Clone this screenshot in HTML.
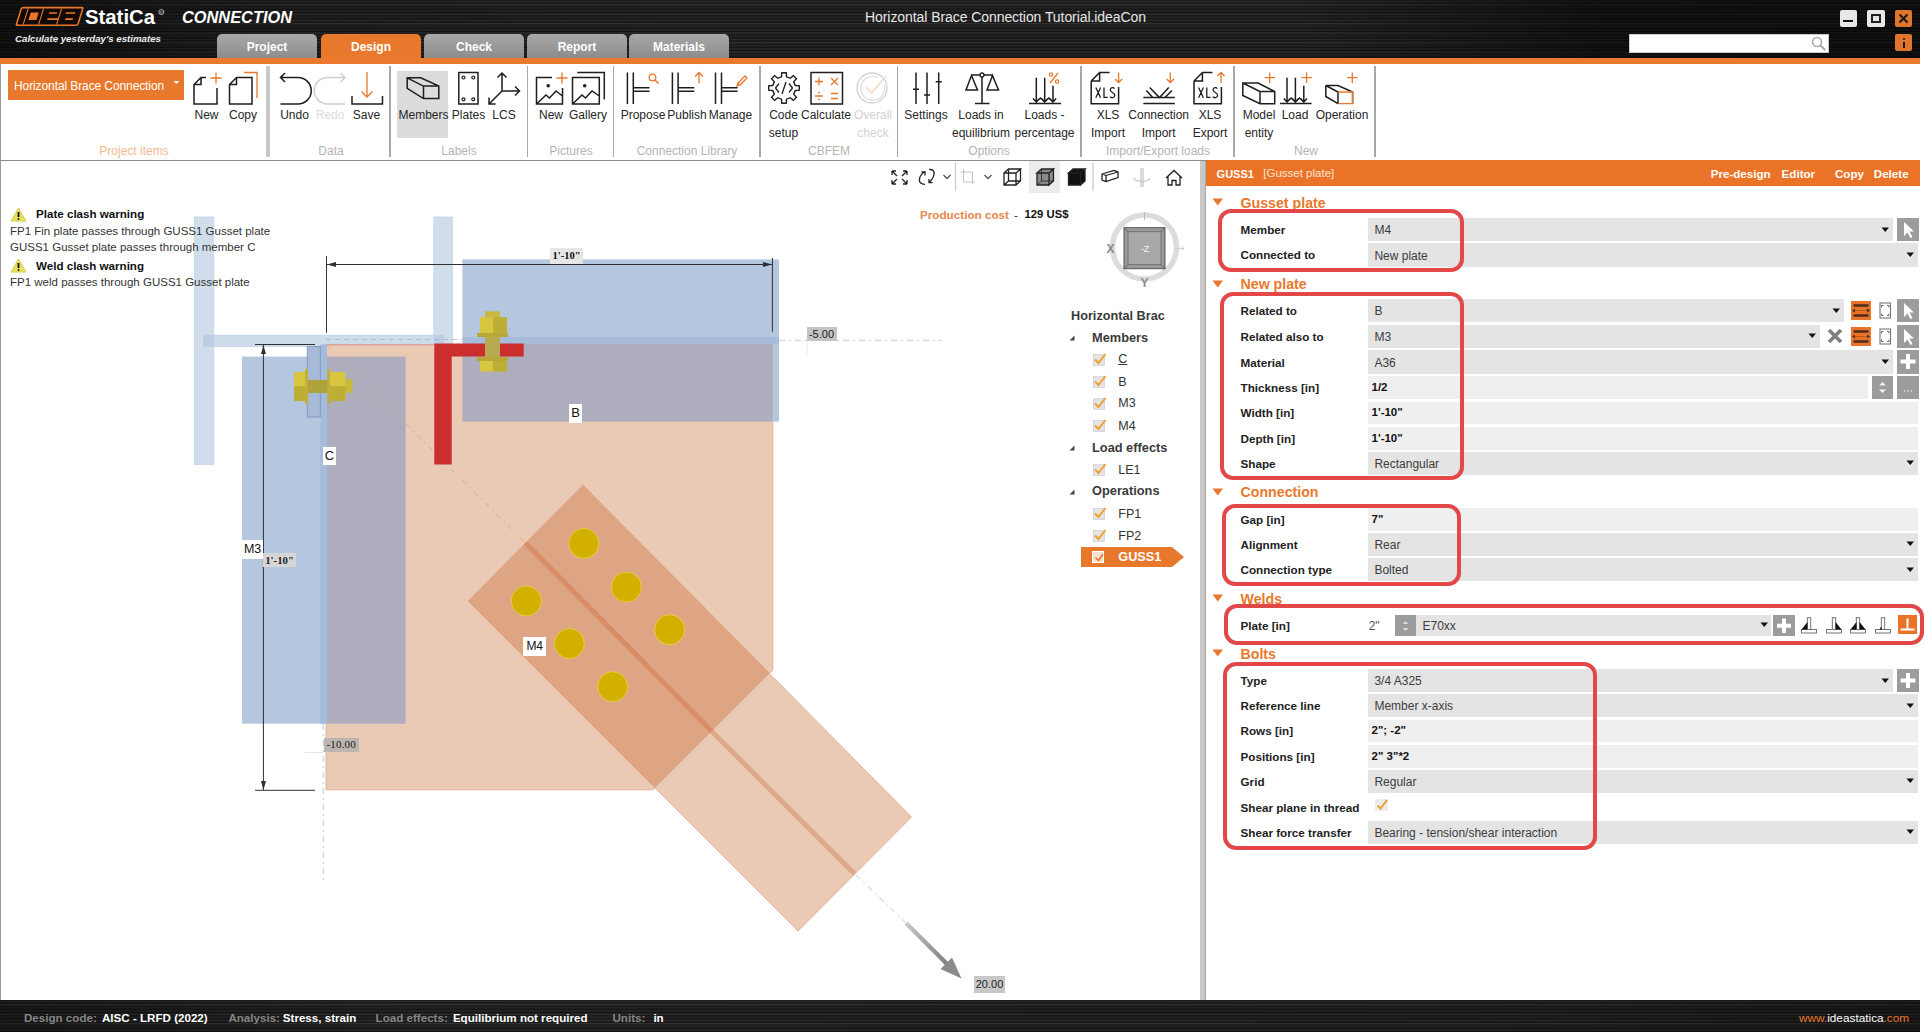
<!DOCTYPE html>
<html><head><meta charset="utf-8">
<style>
*{box-sizing:border-box;margin:0;padding:0}
html,body{width:1925px;height:1032px;overflow:hidden;background:#fff;font-family:"Liberation Sans",sans-serif;position:relative}
.a{position:absolute;white-space:nowrap}
.t{position:absolute;white-space:nowrap;line-height:1}
#title{left:0;top:0;width:1920px;height:58px;background:linear-gradient(90deg,rgba(0,0,0,0.55) 0px,rgba(0,0,0,0.1) 300px,rgba(0,0,0,0) 700px,rgba(0,0,0,0) 1300px,rgba(0,0,0,0.5) 1600px,rgba(0,0,0,0.55) 1920px),repeating-linear-gradient(180deg,#161616 0px,#2a2a2a 1.5px,#121212 3px,#303030 4.5px,#1a1a1a 6px,#242424 8px,#101010 9.5px)}
#oline{left:0;top:58px;width:1920px;height:6px;background:#eb7a2e}
.tab{top:34px;height:24px;width:100px;border-radius:5px 5px 0 0;background:linear-gradient(#a8a8a8,#8c8c8c);color:#fff;font-weight:bold;font-size:12px;text-align:center;line-height:26px}
#ribbon{left:0;top:64px;width:1920px;height:97px;background:#fff;border-left:1px solid #9a9a9a}
#canvas{left:0;top:161px;width:1200px;height:839px;background:#fff;border-left:1px solid #9a9a9a}
#splitter{left:1200px;top:161px;width:6px;height:839px;background:#c8c8c8;border-right:1px solid #a9a9a9}
#panel{left:1206px;top:161px;width:714px;height:839px;background:#fff}
#status{left:0;top:1000px;width:1920px;height:32px;background:linear-gradient(90deg,rgba(0,0,0,0.3) 0px,rgba(0,0,0,0) 400px,rgba(0,0,0,0.1) 1500px,rgba(0,0,0,0.3) 1920px),repeating-linear-gradient(180deg,#161616 0px,#2c2c2c 1.5px,#121212 3px,#323232 4.5px,#1a1a1a 6px,#262626 8px,#101010 9.5px)}
.rt{position:absolute;font-size:12px;color:#262626;text-align:center;width:80px;line-height:14px;white-space:nowrap}
.gl{position:absolute;font-size:12px;color:#b4b4b4;text-align:center;width:140px;line-height:14px;white-space:nowrap}
.sep{position:absolute;top:66px;width:1.5px;height:91px;background:#a8a8a8}
</style></head><body>
<div class="a" id="title"></div>
<svg class="a" style="left:0;top:0" width="300" height="58">
 <g transform="translate(15.1,25.9) skewX(-17.5)">
  <rect x="0.8" y="-18.3" width="61.5" height="17.6" rx="1.5" fill="#120804" stroke="#e8792c" stroke-width="1.6"/>
  <path d="M7.6 -17.5V-1.5 M23 -17.5V-1.5 M41 -17.5V-1.5" stroke="#e8792c" stroke-width="1.1"/>
  <rect x="11.5" y="-13.3" width="7.9" height="7.4" fill="#e8792c"/>
  <path d="M29.8 -12.9H37.8 M30.2 -6.7H41 M46.6 -12.9H56 M48.1 -6.7H55.6" stroke="#e8792c" stroke-width="1.7"/>
 </g>
 <text x="85" y="24" fill="#fff" font-family="Liberation Sans" font-weight="bold" font-size="20" textLength="70" lengthAdjust="spacingAndGlyphs">StatiCa</text>
 <circle cx="161.3" cy="12" r="2.5" fill="none" stroke="#bbb" stroke-width="0.9"/><text x="161.3" y="13.6" font-family="Liberation Sans" font-size="4" fill="#bbb" text-anchor="middle">R</text>
 <text x="182" y="22.5" fill="#fff" font-family="Liberation Sans" font-style="italic" font-weight="bold" font-size="16.5" textLength="110" lengthAdjust="spacingAndGlyphs">CONNECTION</text>
 <text x="15" y="42" fill="#f0f0f0" font-family="Liberation Sans" font-style="italic" font-weight="bold" font-size="9" textLength="146" lengthAdjust="spacingAndGlyphs">Calculate yesterday's estimates</text>
</svg>
<div class="a" style="left:865px;top:9px;font-size:14px;color:#e6e6e6;letter-spacing:-0.07px">Horizontal Brace Connection Tutorial.ideaCon</div>
<div class="a" style="left:1629px;top:34px;width:200px;height:19px;background:#fff;border:1px solid #ccc"></div>
<svg class="a" style="left:1810px;top:35px" width="18" height="18"><circle cx="7" cy="7" r="4.5" fill="none" stroke="#aaa" stroke-width="1.6"/><path d="M10.3 10.3l5 5" stroke="#aaa" stroke-width="2"/></svg>
<div class="a" style="left:1840px;top:10px;width:17px;height:17px;background:#e8e8e8;border-radius:2px"></div>
<div class="a" style="left:1843px;top:20px;width:10px;height:2px;background:#111"></div>
<div class="a" style="left:1867px;top:10px;width:18px;height:17px;background:#e8e8e8;border-radius:2px"></div>
<div class="a" style="left:1871px;top:14px;width:10px;height:9px;border:2px solid #222"></div>
<div class="a" style="left:1895px;top:10px;width:17px;height:17px;background:#e0762e;border-radius:2px"></div>
<svg class="a" style="left:1895px;top:10px" width="17" height="17"><path d="M4.5 4.5l8 8M12.5 4.5l-8 8" stroke="#1a1a1a" stroke-width="2.2"/></svg>
<div class="a" style="left:1895px;top:34px;width:17px;height:17px;background:#e0762e;border-radius:2px"></div>
<div class="a" style="left:1902.5px;top:38px;width:2.4px;height:2.4px;background:#1a1a1a;border-radius:1px"></div>
<div class="a" style="left:1902.5px;top:42px;width:2.4px;height:6px;background:#1a1a1a"></div>
<div class="a" id="oline"></div>

<div class="a" id="oline"></div>
<div class="a tab" style="left:217px">Project</div>
<div class="a tab" style="left:321px;background:#e8792c">Design</div>
<div class="a tab" style="left:424px">Check</div>
<div class="a tab" style="left:527px">Report</div>
<div class="a tab" style="left:629px">Materials</div>
<div class="a" id="ribbon"></div>
<div class="a" style="left:8px;top:70px;width:176px;height:30px;background:#e8792c"></div>
<div class="t" style="left:14px;top:80px;font-size:12px;color:#fff;letter-spacing:-0.1px">Horizontal Brace Connection</div>
<svg class="a" style="left:173px;top:80px" width="8" height="6"><path d="M0.5 1h6l-3 3z" fill="#fff"/></svg>
<div class="a" style="left:397px;top:71px;width:51px;height:67px;background:#dcdcdc"></div>
<svg class="a" style="left:0;top:0" width="1400" height="160"><path d="M217 88V104H194V84.5L201 77.5H206 M194 84.5H201V77.5" stroke="#1e1e1e" stroke-width="1.5" fill="none"/><path d="M216 72.5v11 M210.5 78h11" stroke="#e8792c" stroke-width="1.3" fill="none"/><path d="M252 77.5V104H229.5V84.5L236.5 77.5Z M229.5 84.5H236.5V77.5" stroke="#1e1e1e" stroke-width="1.5" fill="none"/><path d="M244 72.5H257V98" stroke="#e8792c" stroke-width="1.3" fill="none"/><path d="M280.5 77.5H298A13.2 13.2 0 0 1 298 104H280.5 M285 73L280.5 77.5L285 82" stroke="#1e1e1e" stroke-width="1.5" fill="none"/><path d="M345 77.5H327.5A13.2 13.2 0 0 0 327.5 104H345 M340.5 73L345 77.5L340.5 82" stroke="#cfcfcf" stroke-width="1.5" fill="none"/><path d="M367 72V97 M361.5 91.5L367 97L372.5 91.5" stroke="#e8792c" stroke-width="1.3" fill="none"/><path d="M352 96V104H382.5V96" stroke="#1e1e1e" stroke-width="1.5" fill="none"/><path d="M407.2 77.8H420.7L438.8 86.1V98.6H423.5L407.2 88.4Z M407.2 77.8L423.5 86.1V98.6 M423.5 86.1H438.8" stroke="#1e1e1e" stroke-width="1.5" fill="none"/><path d="M458.8 72.5H478V104H458.8Z" stroke="#1e1e1e" stroke-width="1.5" fill="none"/><circle cx="463.5" cy="77.5" r="1.5" fill="none" stroke="#1e1e1e" stroke-width="1.2"/><circle cx="473.3" cy="77.5" r="1.5" fill="none" stroke="#1e1e1e" stroke-width="1.2"/><circle cx="463.5" cy="99.3" r="1.5" fill="none" stroke="#1e1e1e" stroke-width="1.2"/><circle cx="473.3" cy="99.3" r="1.5" fill="none" stroke="#1e1e1e" stroke-width="1.2"/><path d="M502 91V73 M497.5 77.5L502 73L506.5 77.5 M502 91H519.5 M515 86.5L519.5 91L515 95.5 M502 91L489 104 M489 97.5V104H495.5" stroke="#1e1e1e" stroke-width="1.5" fill="none"/><path d="M552 77.5H536.5V104H562.5V88 M536.5 104L546 95L549.5 98L556 91L562.5 96" stroke="#1e1e1e" stroke-width="1.5" fill="none"/><circle cx="548.2" cy="85.7" r="1.8" fill="#1e1e1e"/><path d="M562 72.5v11 M556.5 78h11" stroke="#e8792c" stroke-width="1.3" fill="none"/><path d="M572.5 77.5H599.3V104H572.5Z M572.5 104L582 95L585.5 98L592 91L599.3 96 M577.2 72.6H604.3V99.5" stroke="#1e1e1e" stroke-width="1.5" fill="none"/><circle cx="584.7" cy="85.7" r="1.8" fill="#1e1e1e"/><path d="M627.4 72.5V104 M633.3 72.5V104 M633.3 87.7H649.5 M633.3 91.3H649.5" stroke="#1e1e1e" stroke-width="1.5" fill="none"/><path d="M672.4 72.5V104 M678.1 72.5V104 M678.1 87.7H694.3 M678.1 91.3H694.3" stroke="#1e1e1e" stroke-width="1.5" fill="none"/><path d="M715.5 72.5V104 M721.5 72.5V104 M721.5 87.7H737.6 M721.5 91.3H737.6" stroke="#1e1e1e" stroke-width="1.5" fill="none"/><circle cx="652.5" cy="77.4" r="3.3" fill="none" stroke="#e8792c" stroke-width="1.3"/><path d="M655 80L658.5 83.5" stroke="#e8792c" stroke-width="1.5" fill="none"/><path d="M699 83.5V72.5 M695 76.5L699 72.5L703 76.5" stroke="#e8792c" stroke-width="1.3" fill="none"/><path d="M738 83L745 76L747 78L740 85Z M738 83L737 86L740 85" stroke="#e8792c" stroke-width="1.3" fill="none"/><path d="M795.2 85.5 L799.3 85.8 L799.3 90.2 L795.2 90.5 L793.7 94.2 L796.4 97.3 L793.3 100.4 L790.2 97.7 L786.5 99.2 L786.2 103.3 L781.8 103.3 L781.5 99.2 L777.8 97.7 L774.7 100.4 L771.6 97.3 L774.3 94.2 L772.8 90.5 L768.7 90.2 L768.7 85.8 L772.8 85.5 L774.3 81.8 L771.6 78.7 L774.7 75.6 L777.8 78.3 L781.5 76.8 L781.8 72.7 L786.2 72.7 L786.5 76.8 L790.2 78.3 L793.3 75.6 L796.4 78.7 L793.7 81.8Z" stroke="#1e1e1e" stroke-width="1.4" fill="none"/><path d="M779 83.5L775.5 88L779 92.5 M789 83.5L792.5 88L789 92.5 M786 82L782 94" stroke="#1e1e1e" stroke-width="1.3" fill="none"/><path d="M811 72.5H842.5V104H811Z" stroke="#1e1e1e" stroke-width="1.5" fill="none"/><path d="M819 77.5v8 M815 81.5h8 M831 78l7 7 M838 78l-7 7 M815 96h8 M831 93.5h7 M831 98.5h7" stroke="#e8792c" stroke-width="1.3" fill="none"/><circle cx="819" cy="92.5" r="0.9" fill="#e8792c"/><circle cx="819" cy="99.5" r="0.9" fill="#e8792c"/><circle cx="872" cy="88" r="15" fill="none" stroke="#d0d0d0" stroke-width="1.3"/><path d="M884 84A12 12 0 1 1 878 77.5" fill="none" stroke="#dedede" stroke-width="1.2"/><path d="M866 87L871.5 93L886 76" stroke="#f6d9c4" stroke-width="1.5" fill="none"/><path d="M916 72.5V104 M927 72.5V104 M938.7 72.5V104 M913 89.3h6 M924 95h6 M935.7 81.8h6" stroke="#1e1e1e" stroke-width="1.5" fill="none"/><path d="M971 75H993 M982 77V103.5 M975 103.5H989.5 M971.5 75.5L966 90H977.5Z M992.5 75.5L987 90H998.5Z" stroke="#1e1e1e" stroke-width="1.5" fill="none"/><circle cx="982" cy="75" r="2" fill="#fff" stroke="#1e1e1e" stroke-width="1.3"/><path d="M1029 103.5H1061 M1036.3 77.7V102 M1044.7 77.7V102 M1053 85.7V102 M1033 98.5L1036.3 102L1039.5 98.5 M1041.5 98.5L1044.7 102L1048 98.5 M1049.8 98.5L1053 102L1056.2 98.5 M1036.3 102L1040.5 98L1044.7 102L1048.8 98L1053 102" stroke="#1e1e1e" stroke-width="1.5" fill="none"/><path d="M1050 83L1058 73" stroke="#e8792c" stroke-width="1.3" fill="none"/><circle cx="1051" cy="74.5" r="1.7" fill="none" stroke="#e8792c" stroke-width="1.2"/><circle cx="1057" cy="81.5" r="1.7" fill="none" stroke="#e8792c" stroke-width="1.2"/><path d="M1091.2 81V103.7H1118.6000000000001V87 M1091.2 81L1099.6000000000001 72.5H1109.6000000000001 M1091.2 81H1099.6000000000001V72.5" stroke="#1e1e1e" stroke-width="1.5" fill="none"/><path d="M1095.8 87.5L1100.6 97.8 M1100.6 87.5L1095.8 97.8 M1104.0 87.5V97.3H1107.8 M1114.5 88.6C1113.5 87.2 1110.3 87.2 1110.3 90C1110.3 92.6 1114.8 92.4 1114.8 95.2C1114.8 98.3 1111.0 98.3 1110.0 96.6" stroke="#1e1e1e" stroke-width="1.3" fill="none"/><path d="M1194 81V103.7H1221.4V87 M1194 81L1202.4 72.5H1212.4 M1194 81H1202.4V72.5" stroke="#1e1e1e" stroke-width="1.5" fill="none"/><path d="M1198.6 87.5L1203.3999999999999 97.8 M1203.3999999999999 87.5L1198.6 97.8 M1206.8 87.5V97.3H1210.6 M1217.3 88.6C1216.3 87.2 1213.1 87.2 1213.1 90C1213.1 92.6 1217.6 92.4 1217.6 95.2C1217.6 98.3 1213.8 98.3 1212.8 96.6" stroke="#1e1e1e" stroke-width="1.3" fill="none"/><path d="M1118.6 72.5V82.5 M1115 79L1118.6 82.5L1122.2 79" stroke="#e8792c" stroke-width="1.3" fill="none"/><path d="M1221 83V72.5 M1217.4 76L1221 72.5L1224.6 76" stroke="#e8792c" stroke-width="1.3" fill="none"/><path d="M1143.4 97.6H1174.8 M1143.4 103.6H1174.8 M1149.7 87.6L1159.5 97.6L1168.8 87.6 M1146.3 90.5L1152.8 97.6 M1165 97.6L1171.9 90.5" stroke="#1e1e1e" stroke-width="1.5" fill="none"/><path d="M1170.3 72.5V82.5 M1166.7 79L1170.3 82.5L1173.9 79" stroke="#e8792c" stroke-width="1.3" fill="none"/><path d="M1242.8 83H1258L1274.7 91.5V103.7H1260L1242.8 95.5Z M1242.8 83L1260 91.5V103.7 M1260 91.5H1274.7" stroke="#1e1e1e" stroke-width="1.5" fill="none"/><path d="M1269.7 72.5v10.5 M1264.5 77.7h10.5" stroke="#e8792c" stroke-width="1.3" fill="none"/><path d="M1280 103.5H1311.6 M1287 77.7V102 M1295.4 77.7V102 M1303.8 85.7V102 M1283.8 98.5L1287 102L1290.2 98.5 M1292.2 98.5L1295.4 102L1298.6 98.5 M1300.6 98.5L1303.8 102L1307 98.5 M1287 102L1291.2 98L1295.4 102L1299.6 98L1303.8 102" stroke="#1e1e1e" stroke-width="1.5" fill="none"/><path d="M1306.6 72.5v10.5 M1301.4 77.7h10.5" stroke="#e8792c" stroke-width="1.3" fill="none"/><path d="M1325.8 85.5H1338L1352.6 92V103.7 M1325.8 85.5V96.5L1338 103.7 M1325.8 85.5L1338 92V103.7" stroke="#1e1e1e" stroke-width="1.5" fill="none"/><path d="M1338 92H1352.6V103.7H1338" stroke="#e8792c" stroke-width="1.3" fill="none"/><path d="M1352.3 72.5v10.5 M1347.1 77.7h10.5" stroke="#e8792c" stroke-width="1.3" fill="none"/></svg>
<div class="rt" style="left:166.5px;top:108.0px">New</div>
<div class="rt" style="left:203px;top:108.0px">Copy</div>
<div class="rt" style="left:254.5px;top:108.0px">Undo</div>
<div class="rt" style="left:290px;top:108.0px;color:#dcdcdc">Redo</div>
<div class="rt" style="left:326.5px;top:108.0px">Save</div>
<div class="rt" style="left:383.5px;top:108.0px">Members</div>
<div class="rt" style="left:428.5px;top:108.0px">Plates</div>
<div class="rt" style="left:464px;top:108.0px">LCS</div>
<div class="rt" style="left:511px;top:108.0px">New</div>
<div class="rt" style="left:548px;top:108.0px">Gallery</div>
<div class="rt" style="left:603px;top:108.0px">Propose</div>
<div class="rt" style="left:647px;top:108.0px">Publish</div>
<div class="rt" style="left:690.5px;top:108.0px">Manage</div>
<div class="rt" style="left:743.5px;top:108.0px">Code</div>
<div class="rt" style="left:743.5px;top:125.5px">setup</div>
<div class="rt" style="left:786px;top:108.0px">Calculate</div>
<div class="rt" style="left:833px;top:108.0px;color:#d2d2d2">Overall</div>
<div class="rt" style="left:833px;top:125.5px;color:#d2d2d2">check</div>
<div class="rt" style="left:886px;top:108.0px">Settings</div>
<div class="rt" style="left:941px;top:108.0px">Loads in</div>
<div class="rt" style="left:941px;top:125.5px">equilibrium</div>
<div class="rt" style="left:1004.5px;top:108.0px">Loads -</div>
<div class="rt" style="left:1004.5px;top:125.5px">percentage</div>
<div class="rt" style="left:1068px;top:108.0px">XLS</div>
<div class="rt" style="left:1068px;top:125.5px">Import</div>
<div class="rt" style="left:1118.7px;top:108.0px">Connection</div>
<div class="rt" style="left:1118.7px;top:125.5px">Import</div>
<div class="rt" style="left:1170px;top:108.0px">XLS</div>
<div class="rt" style="left:1170px;top:125.5px">Export</div>
<div class="rt" style="left:1219px;top:108.0px">Model</div>
<div class="rt" style="left:1219px;top:125.5px">entity</div>
<div class="rt" style="left:1255px;top:108.0px">Load</div>
<div class="rt" style="left:1302px;top:108.0px">Operation</div>
<div class="gl" style="left:64px;top:143.5px;color:#f3b88e">Project items</div>
<div class="gl" style="left:261px;top:143.5px">Data</div>
<div class="gl" style="left:389px;top:143.5px">Labels</div>
<div class="gl" style="left:501px;top:143.5px">Pictures</div>
<div class="gl" style="left:617px;top:143.5px">Connection Library</div>
<div class="gl" style="left:759px;top:143.5px">CBFEM</div>
<div class="gl" style="left:919px;top:143.5px">Options</div>
<div class="gl" style="left:1088px;top:143.5px">Import/Export loads</div>
<div class="gl" style="left:1236px;top:143.5px">New</div>
<div class="a" style="left:265.5px;top:66px;width:4.5px;height:91px;background:#c8c8c8"></div>
<div class="sep" style="left:389px"></div>
<div class="sep" style="left:526.5px"></div>
<div class="sep" style="left:612.5px"></div>
<div class="sep" style="left:759px"></div>
<div class="sep" style="left:896.5px"></div>
<div class="sep" style="left:1080px"></div>
<div class="sep" style="left:1233.4px"></div>
<div class="sep" style="left:1374.4px"></div>
<div class="a" id="canvas"></div>
<div class="a" style="left:0;top:160px;width:1206px;height:1px;background:#8a8a8a"></div>
<div class="a" id="splitter"></div>
<div class="a" id="panel"></div>
<div class="a" id="status"></div>
<svg class="a" style="left:0;top:161px" width="1200" height="837" viewBox="0 161 1200 837">
<defs><linearGradient id="arrg" x1="0" y1="0" x2="1" y2="1"><stop offset="0" stop-color="#c8c8c8"/><stop offset="1" stop-color="#7a7a7a"/></linearGradient></defs>
<rect x="194.3" y="217" width="19.5" height="247.5" fill="#d0deec" stroke="#c4d4e6" stroke-width="0.8"/>
<rect x="433.8" y="217" width="18.6" height="247.5" fill="#d0deec" stroke="#c4d4e6" stroke-width="0.8"/>
<rect x="203.5" y="335.2" width="240.2" height="11.3" fill="#cfdcec" stroke="#c0d0e4" stroke-width="0.8"/>
<rect x="203.5" y="335.2" width="10.3" height="11.3" fill="#bccde4"/>
<rect x="433.8" y="335.2" width="9.9" height="11.3" fill="#bccde4"/>
<path d="M326 344.5H772.8V670.3L653.1 789.8H326Z" fill="#eacab4" stroke="#e2a888" stroke-width="0.8"/>
<path d="M326 344.8H433" stroke="#d9a0a0" stroke-width="1.2"/>
<path d="M583 485L911.5 817L798 931L468 601Z" fill="#eacab4" stroke="#e2a888" stroke-width="0.8"/>
<path d="M583 485L769.8 673.2L655 788L468 601Z" fill="#dda584"/>
<path d="M525.5 543L712 731.5" stroke="#d88d66" stroke-width="5"/>
<path d="M712 731.5L854.7 874" stroke="#dfa888" stroke-width="5"/>
<rect x="242" y="356.6" width="84" height="367.1" fill="#b5c6df"/>
<rect x="326" y="356.6" width="79.6" height="367.1" fill="#adadbd"/>
<rect x="320.3" y="344.5" width="6.7" height="379.2" fill="#a3bbdc"/>
<rect x="307.3" y="346.5" width="13" height="70.5" fill="#a6b9d6" stroke="#7f95bb" stroke-width="0.9"/>
<rect x="462.4" y="259.4" width="316.6" height="78" fill="#b5c6df"/>
<rect x="462.4" y="337" width="316.6" height="7" fill="#a7bcda"/>
<rect x="462.4" y="344" width="310.4" height="77.6" fill="#adadbd"/>
<rect x="772.8" y="344" width="6.2" height="77.6" fill="#b5c6df"/>
<path d="M326 339.5H462" stroke="#a8b4c4" stroke-width="0.8" stroke-dasharray="5 4"/>
<path d="M779 340.3H942" stroke="#c0c0c0" stroke-width="0.8" stroke-dasharray="6 4 2 4"/>
<path d="M323.3 724V880" stroke="#a8c0d8" stroke-width="0.8" stroke-dasharray="6 4 2 4"/>
<path d="M326.5 344.5L525.5 543" stroke="#d0a890" stroke-width="0.8" stroke-dasharray="6 4 2 4"/>
<path d="M856 875L905 922" stroke="#a8c0d8" stroke-width="0.8" stroke-dasharray="6 4 2 4"/>
<path d="M807 341V357" stroke="#e4e4e4" stroke-width="0.8"/>
<path d="M305 752.5H324" stroke="#e0e0e0" stroke-width="0.8"/>
<path d="M434.3 343.6H523.7V356.5H451.7V464.4H434.3Z" fill="#cc2d2d"/>
<rect x="328" y="380" width="17.5" height="13" fill="#c4b43c"/>
<rect x="307" y="380" width="21" height="13" fill="#b0a23a"/>
<rect x="294" y="372" width="13" height="29" fill="#d8c640"/><rect x="294" y="386" width="13" height="15" fill="#bfae36"/>
<rect x="305" y="369" width="3" height="35" fill="#c0b03a"/>
<rect x="327.4" y="369" width="3" height="35" fill="#c0b03a"/>
<rect x="330" y="372" width="15.5" height="29" fill="#d8c640"/><rect x="330" y="386" width="15.5" height="15" fill="#bfae36"/>
<rect x="345.5" y="379" width="7" height="14" fill="#c8b83e"/>
<rect x="485" y="311.3" width="15" height="6" fill="#c8b83e"/>
<rect x="480" y="317" width="27" height="16" fill="#d8c640"/><rect x="493" y="317" width="14" height="16" fill="#bfae36"/>
<rect x="477" y="333" width="31" height="4" fill="#b8a838"/>
<rect x="485" y="337" width="15" height="21" fill="#b8aa50"/>
<rect x="477" y="357" width="31" height="4" fill="#b8a838"/>
<rect x="480" y="361" width="27" height="10.5" fill="#d8c640"/><rect x="493" y="361" width="14" height="10.5" fill="#bfae36"/>
<circle cx="583.8" cy="543.4" r="15" fill="#d2b000" stroke="#e6cc3c" stroke-width="1"/>
<circle cx="626.4" cy="587.1" r="15" fill="#d2b000" stroke="#e6cc3c" stroke-width="1"/>
<circle cx="669.6" cy="629.7" r="15" fill="#d2b000" stroke="#e6cc3c" stroke-width="1"/>
<circle cx="526.3" cy="601" r="15" fill="#d2b000" stroke="#e6cc3c" stroke-width="1"/>
<circle cx="569.4" cy="643.6" r="15" fill="#d2b000" stroke="#e6cc3c" stroke-width="1"/>
<circle cx="612.6" cy="686.7" r="15" fill="#d2b000" stroke="#e6cc3c" stroke-width="1"/>
<path d="M906 923L950 967" stroke="url(#arrg)" stroke-width="4.5"/>
<path d="M961.5 978.5L940.5 969L952 957.5Z" fill="#8a8a8a"/>
<path d="M326.5 256V332.6 M772.4 258V331.8 M326.5 264.5H772.4" stroke="#303030" stroke-width="1"/>
<path d="M327 264.5L336 262V267Z M772 264.5L763 262V267Z" fill="#303030"/>
<path d="M263.4 344.5V790 M255 344.5H315 M255 790.3H315" stroke="#303030" stroke-width="1"/>
<path d="M263.4 345L261 354H266Z M263.4 790L261 781H266Z" fill="#303030"/>
</svg>
<div class="a" style="left:323px;top:447px;width:13px;height:18px;background:#fff;font-family:'Liberation Sans',sans-serif;font-size:13px;color:#111;text-align:center;line-height:18px;letter-spacing:0px;font-weight:normal">C</div>
<div class="a" style="left:569px;top:404px;width:13px;height:18.5px;background:#fff;font-family:'Liberation Sans',sans-serif;font-size:13px;color:#111;text-align:center;line-height:18.5px;letter-spacing:0px;font-weight:normal">B</div>
<div class="a" style="left:241.6px;top:540px;width:21.8px;height:18.5px;background:#fff;font-family:'Liberation Sans',sans-serif;font-size:12.5px;color:#111;text-align:center;line-height:18.5px;letter-spacing:-0.3px;font-weight:normal">M3</div>
<div class="a" style="left:523px;top:637px;width:23.3px;height:19px;background:#fff;font-family:'Liberation Sans',sans-serif;font-size:12px;color:#111;text-align:center;line-height:19px;letter-spacing:-0.3px;font-weight:normal">M4</div>
<div class="a" style="left:806.5px;top:326.5px;width:30px;height:14.1px;background:#c4c4c4;font-family:'Liberation Sans',sans-serif;font-size:11px;color:#222;text-align:center;line-height:14.1px;letter-spacing:0px;font-weight:normal">-5.00</div>
<div class="a" style="left:323.6px;top:738.4px;width:35.2px;height:13.4px;background:#bcb4ae;font-family:'Liberation Serif',serif;font-size:11px;color:#222;text-align:center;line-height:13.4px;letter-spacing:0.2px;font-weight:normal">-10.00</div>
<div class="a" style="left:974px;top:976px;width:31px;height:17px;background:#c8c8c8;font-family:'Liberation Sans',sans-serif;font-size:11px;color:#222;text-align:center;line-height:17px;letter-spacing:0px;font-weight:normal">20.00</div>
<div class="a" style="left:550px;top:248px;width:33px;height:16px;background:#e6e6e6;font-family:'Liberation Serif',serif;font-size:10.5px;color:#111;text-align:center;line-height:16px;letter-spacing:0px;font-weight:bold">1'-10"</div>
<div class="a" style="left:263.4px;top:553.4px;width:32.3px;height:14px;background:#d6d6d6;font-family:'Liberation Serif',serif;font-size:10.8px;color:#222;text-align:center;line-height:14px;letter-spacing:0px;font-weight:bold">1'-10"</div>
<svg class="a" style="left:10px;top:206.5px" width="17" height="15"><path d="M8.5 1L16 14H1Z" fill="#e6e05a" stroke="#d8d050" stroke-width="1"/><path d="M8.5 5V10" stroke="#111" stroke-width="1.8"/><circle cx="8.5" cy="12" r="0.9" fill="#111"/></svg>
<svg class="a" style="left:10px;top:257.5px" width="17" height="15"><path d="M8.5 1L16 14H1Z" fill="#e6e05a" stroke="#d8d050" stroke-width="1"/><path d="M8.5 5V10" stroke="#111" stroke-width="1.8"/><circle cx="8.5" cy="12" r="0.9" fill="#111"/></svg>
<div class="t" style="left:36px;top:208px;font-size:11.6px;font-weight:bold;color:#111">Plate clash warning</div>
<div class="t" style="left:10px;top:225.5px;font-size:11.5px;color:#333">FP1 Fin plate passes through GUSS1 Gusset plate</div>
<div class="t" style="left:10px;top:241.5px;font-size:11.5px;color:#333">GUSS1 Gusset plate passes through member C</div>
<div class="t" style="left:36px;top:259.5px;font-size:11.6px;font-weight:bold;color:#111">Weld clash warning</div>
<div class="t" style="left:10px;top:277px;font-size:11.5px;color:#333">FP1 weld passes through GUSS1 Gusset plate</div>
<div class="t" style="left:920px;top:208.5px;font-size:11.7px;font-weight:bold;color:#e5884e">Production cost</div>
<div class="t" style="left:1014px;top:208.5px;font-size:11.7px;color:#333">-</div>
<div class="t" style="left:1024.5px;top:208.5px;font-size:11.3px;font-weight:bold;color:#111">129 US$</div>
<div class="a" style="left:1029px;top:160.5px;width:31px;height:32px;background:#ececec"></div>
<svg class="a" style="left:880px;top:161px" width="320" height="32" viewBox="880 161 320 32">
<g stroke="#222" stroke-width="1.3" fill="none">
<path d="M892 171L897 176M892 171v4M892 171h4 M907 171L902 176M907 171v4M907 171h-4 M892 184L897 179M892 184v-4M892 184h4 M907 184L902 179M907 184v-4M907 184h-4"/>
<path d="M925 171.5C918 176 917 184.5 925 184.3 M921.5 172H925V175.5 M929.2 169.5C936.5 169 935 177 929 182.7 M929 179V182.7H932.5"/>
<path d="M943.5 175l3.5 3.5l3.5-3.5" stroke="#555"/>
<path d="M955.5 163V191 M1093 163V191" stroke="#ccc"/>
<path d="M963.5 169V182H975 M960.6 172H972.5V184" stroke="#c4c4c4" stroke-width="1"/>
<path d="M984.5 175l3.5 3.5l3.5-3.5" stroke="#555"/>
<path d="M1004 173H1016V185H1004Z M1004 173L1008.5 169H1020.5L1016 173 M1020.5 169V181L1016 185 M1008.5 169V181H1020.5 M1008.5 181L1004 185"/>
<path d="M1037 173H1049V185H1037Z M1037 173L1041.5 169H1053.5L1049 173Z M1053.5 169V181L1049 185V173Z" fill="#8a8a8a"/>
<path d="M1041.5 169V181H1053.5 M1041.5 181L1037 185" stroke-width="0.8"/>
<path d="M1068.5 173H1080.5V185H1068.5Z M1068.5 173L1073 169H1085L1080.5 173Z M1085 169V181L1080.5 185V173Z" fill="#111"/>
<path d="M1102 174L1114 170.5L1118 172V177.5L1106 181.5L1102 180Z M1102 174L1106 175.5V181.5 M1106 175.5L1118 172"/>
<path d="M1141 168V187 M1143 168V187 M1134 178A8 3.5 0 0 0 1150 178" stroke="#c8c8c8"/>
<path d="M1166 178L1174 170.5L1182 178 M1168 176V185H1172V180.5H1176V185H1180V176"/>
</g></svg>
<svg class="a" style="left:1100px;top:205px" width="90" height="90" viewBox="1100 205 90 90">
<circle cx="1144.5" cy="247" r="32" fill="none" stroke="#dcdcdc" stroke-width="5.6"/>
<path d="M1144.5 212V220" stroke="#bbb" stroke-width="1"/>
<rect x="1124" y="227.7" width="41" height="41" fill="#9a9a9a" stroke="#555" stroke-width="1"/>
<rect x="1128" y="231.7" width="33" height="33" fill="#a8a8a8" stroke="#666" stroke-width="0.8"/>
<path d="M1124 227.7L1128 231.7M1165 227.7L1161 231.7M1124 268.7L1128 264.7M1165 268.7L1161 264.7" stroke="#555" stroke-width="0.8"/>
<text x="1145" y="251.5" font-family="Liberation Sans" font-size="9" fill="#f4f4f4" text-anchor="middle">-Z</text>
<text x="1110.5" y="253" font-family="Liberation Sans" font-weight="bold" font-size="12" fill="#8a8a8a" text-anchor="middle">X</text>
<text x="1144.5" y="287" font-family="Liberation Sans" font-weight="bold" font-size="12" fill="#8a8a8a" text-anchor="middle">Y</text>
<path d="M1175 248.5H1184 M1181.5 246.5L1184 248.5L1181.5 250.5" stroke="#c8c8c8" stroke-width="0.9" fill="none"/>
</svg>
<div class="t" style="left:1071px;top:309.5px;font-size:12.7px;font-weight:bold;color:#3a3a3a">Horizontal Brac</div>
<svg class="a" style="left:1068px;top:334.4px" width="8" height="8"><path d="M6.5 1.5V6.5H1.5Z" fill="#444"/></svg>
<div class="t" style="left:1092px;top:331.9px;font-size:12.8px;font-weight:bold;color:#3a3a3a">Members</div>
<div class="a" style="left:1093px;top:353.7px;width:12px;height:12px;background:#e4e4e4;border:1px solid #d8d8d8"></div>
<svg class="a" style="left:1092px;top:350.7px" width="16" height="16"><path d="M3 8.5L6.5 12L13.5 3" stroke="#f0a030" stroke-width="2" fill="none"/></svg>
<div class="t" style="left:1118.3px;top:353.2px;font-size:12.5px;color:#333;text-decoration:underline">C</div>
<div class="a" style="left:1093px;top:376.2px;width:12px;height:12px;background:#e4e4e4;border:1px solid #d8d8d8"></div>
<svg class="a" style="left:1092px;top:373.2px" width="16" height="16"><path d="M3 8.5L6.5 12L13.5 3" stroke="#f0a030" stroke-width="2" fill="none"/></svg>
<div class="t" style="left:1118.3px;top:375.7px;font-size:12.5px;color:#333">B</div>
<div class="a" style="left:1093px;top:397.9px;width:12px;height:12px;background:#e4e4e4;border:1px solid #d8d8d8"></div>
<svg class="a" style="left:1092px;top:394.9px" width="16" height="16"><path d="M3 8.5L6.5 12L13.5 3" stroke="#f0a030" stroke-width="2" fill="none"/></svg>
<div class="t" style="left:1118.3px;top:397.4px;font-size:12.5px;color:#333">M3</div>
<div class="a" style="left:1093px;top:420.4px;width:12px;height:12px;background:#e4e4e4;border:1px solid #d8d8d8"></div>
<svg class="a" style="left:1092px;top:417.4px" width="16" height="16"><path d="M3 8.5L6.5 12L13.5 3" stroke="#f0a030" stroke-width="2" fill="none"/></svg>
<div class="t" style="left:1118.3px;top:419.9px;font-size:12.5px;color:#333">M4</div>
<svg class="a" style="left:1068px;top:444.3px" width="8" height="8"><path d="M6.5 1.5V6.5H1.5Z" fill="#444"/></svg>
<div class="t" style="left:1092px;top:441.8px;font-size:12.8px;font-weight:bold;color:#3a3a3a">Load effects</div>
<div class="a" style="left:1093px;top:464px;width:12px;height:12px;background:#e4e4e4;border:1px solid #d8d8d8"></div>
<svg class="a" style="left:1092px;top:461px" width="16" height="16"><path d="M3 8.5L6.5 12L13.5 3" stroke="#f0a030" stroke-width="2" fill="none"/></svg>
<div class="t" style="left:1118.3px;top:463.5px;font-size:12.5px;color:#333">LE1</div>
<svg class="a" style="left:1068px;top:487.9px" width="8" height="8"><path d="M6.5 1.5V6.5H1.5Z" fill="#444"/></svg>
<div class="t" style="left:1092px;top:485.4px;font-size:12.8px;font-weight:bold;color:#3a3a3a">Operations</div>
<div class="a" style="left:1093px;top:508px;width:12px;height:12px;background:#e4e4e4;border:1px solid #d8d8d8"></div>
<svg class="a" style="left:1092px;top:505px" width="16" height="16"><path d="M3 8.5L6.5 12L13.5 3" stroke="#f0a030" stroke-width="2" fill="none"/></svg>
<div class="t" style="left:1118.3px;top:507.5px;font-size:12.5px;color:#333">FP1</div>
<div class="a" style="left:1093px;top:530px;width:12px;height:12px;background:#e4e4e4;border:1px solid #d8d8d8"></div>
<svg class="a" style="left:1092px;top:527px" width="16" height="16"><path d="M3 8.5L6.5 12L13.5 3" stroke="#f0a030" stroke-width="2" fill="none"/></svg>
<div class="t" style="left:1118.3px;top:529.5px;font-size:12.5px;color:#333">FP2</div>
<svg class="a" style="left:1081px;top:547px" width="104" height="21"><path d="M0 0H91L103 10L91 20H0Z" fill="#e8792c"/></svg>
<div class="a" style="left:1092px;top:551px;width:12px;height:12px;background:#f8e0d0;border:1px solid #fff"></div>
<svg class="a" style="left:1092px;top:549px" width="16" height="16"><path d="M3.5 8.5L6.5 11.5L11 5" stroke="#e8792c" stroke-width="1.6" fill="none"/></svg>
<div class="t" style="left:1118.3px;top:550.5px;font-size:12.7px;font-weight:bold;color:#fff">GUSS1</div>
<div class="a" style="left:1206px;top:160px;width:714px;height:26px;background:#ea7327"></div>
<div class="t" style="left:1216.6px;top:168.5px;font-size:11px;font-weight:bold;color:#fff">GUSS1</div>
<div class="t" style="left:1263.3px;top:168px;font-size:11.5px;color:#fbe3d2">[Gusset plate]</div>
<div class="t" style="left:1710.7px;top:168px;font-size:11.6px;font-weight:bold;color:#fff">Pre-design</div>
<div class="t" style="left:1781.6px;top:168px;font-size:11.6px;font-weight:bold;color:#fff">Editor</div>
<div class="t" style="left:1835px;top:168px;font-size:11.6px;font-weight:bold;color:#fff">Copy</div>
<div class="t" style="left:1873.8px;top:168px;font-size:11.6px;font-weight:bold;color:#fff">Delete</div>
<svg class="a" style="left:1212px;top:198px" width="12" height="9"><path d="M0.5 0.5H11L5.75 7.5Z" fill="#e8792c"/></svg>
<div class="t" style="left:1240.5px;top:195.5px;font-size:14.2px;font-weight:bold;color:#e8792c">Gusset plate</div>
<div class="t" style="left:1240.5px;top:223.85000000000002px;font-size:11.7px;font-weight:bold;color:#222">Member</div>
<div class="a" style="left:1368px;top:217.6px;width:525px;height:23.900000000000006px;background:#e4e4e4"></div>
<div class="t" style="left:1374.4px;top:223.95000000000002px;font-size:12px;color:#3c3c3c">M4</div>
<svg class="a" style="left:1881px;top:226.55px" width="9" height="6"><path d="M0.5 0.5H8L4.25 5Z" fill="#111"/></svg>
<div class="a" style="left:1896.5px;top:217.6px;width:22px;height:23.900000000000006px;background:#9c9c9c"></div>
<svg class="a" style="left:1896.5px;top:217.6px" width="22" height="23.900000000000006"><path d="M7 4L7 18L10.5 14.5L13.5 20L15.5 19L12.5 13.5H17Z" fill="#fff"/></svg>
<div class="t" style="left:1240.5px;top:249.45px;font-size:11.7px;font-weight:bold;color:#222">Connected to</div>
<div class="a" style="left:1368px;top:243.4px;width:550px;height:23.49999999999997px;background:#e4e4e4"></div>
<div class="t" style="left:1374.4px;top:249.54999999999998px;font-size:12px;color:#3c3c3c">New plate</div>
<svg class="a" style="left:1905.8px;top:252.14999999999998px" width="9" height="6"><path d="M0.5 0.5H8L4.25 5Z" fill="#111"/></svg>
<svg class="a" style="left:1212px;top:279.6px" width="12" height="9"><path d="M0.5 0.5H11L5.75 7.5Z" fill="#e8792c"/></svg>
<div class="t" style="left:1240.5px;top:277.1px;font-size:14.2px;font-weight:bold;color:#e8792c">New plate</div>
<div class="t" style="left:1240.5px;top:304.8px;font-size:11.7px;font-weight:bold;color:#222">Related to</div>
<div class="a" style="left:1368px;top:299px;width:475.5px;height:23px;background:#e4e4e4"></div>
<div class="t" style="left:1374.4px;top:304.9px;font-size:12px;color:#3c3c3c">B</div>
<svg class="a" style="left:1832px;top:307.5px" width="9" height="6"><path d="M0.5 0.5H8L4.25 5Z" fill="#111"/></svg>
<svg class="a" style="left:1851px;top:301.0px" width="20" height="19"><rect x="0" y="0" width="20" height="19" fill="#ea7327"/><path d="M2.5 4.5H17.5 M2.5 14.5H17.5" stroke="#4a2e1e" stroke-width="2.6"/><path d="M1 9.5L4 7.5V11.5Z M19 9.5L16 7.5V11.5Z" fill="#4a2e1e"/><path d="M4 9.5H16" stroke="#b85a20" stroke-width="1"/></svg>
<svg class="a" style="left:1879px;top:302.0px" width="13" height="17"><rect x="1" y="1" width="10.5" height="15" fill="#fff" stroke="#777" stroke-width="1.1"/><path d="M2.5 3.5h2M2.5 3.5v2 M10 3.5h-2M10 3.5v2 M2.5 13.5h2M2.5 13.5v-2 M10 13.5h-2M10 13.5v-2" stroke="#666" stroke-width="1"/></svg>
<div class="a" style="left:1896.5px;top:299px;width:22px;height:23px;background:#9c9c9c"></div>
<svg class="a" style="left:1896.5px;top:299px" width="22" height="23"><path d="M7 4L7 18L10.5 14.5L13.5 20L15.5 19L12.5 13.5H17Z" fill="#fff"/></svg>
<div class="t" style="left:1240.5px;top:330.6px;font-size:11.7px;font-weight:bold;color:#222">Related also to</div>
<div class="a" style="left:1368px;top:325px;width:452px;height:22.600000000000023px;background:#e4e4e4"></div>
<div class="t" style="left:1374.4px;top:330.7px;font-size:12px;color:#3c3c3c">M3</div>
<svg class="a" style="left:1808px;top:333.3px" width="9" height="6"><path d="M0.5 0.5H8L4.25 5Z" fill="#111"/></svg>
<svg class="a" style="left:1826px;top:327.3px" width="18" height="18"><path d="M3 3L15 15M15 3L3 15" stroke="#808080" stroke-width="3.8"/></svg>
<svg class="a" style="left:1851px;top:326.8px" width="20" height="19"><rect x="0" y="0" width="20" height="19" fill="#ea7327"/><path d="M2.5 4.5H17.5 M2.5 14.5H17.5" stroke="#4a2e1e" stroke-width="2.6"/><path d="M1 9.5L4 7.5V11.5Z M19 9.5L16 7.5V11.5Z" fill="#4a2e1e"/><path d="M4 9.5H16" stroke="#b85a20" stroke-width="1"/></svg>
<svg class="a" style="left:1879px;top:327.8px" width="13" height="17"><rect x="1" y="1" width="10.5" height="15" fill="#fff" stroke="#777" stroke-width="1.1"/><path d="M2.5 3.5h2M2.5 3.5v2 M10 3.5h-2M10 3.5v2 M2.5 13.5h2M2.5 13.5v-2 M10 13.5h-2M10 13.5v-2" stroke="#666" stroke-width="1"/></svg>
<div class="a" style="left:1896.5px;top:325px;width:22px;height:22.600000000000023px;background:#9c9c9c"></div>
<svg class="a" style="left:1896.5px;top:325px" width="22" height="22.600000000000023"><path d="M7 4L7 18L10.5 14.5L13.5 20L15.5 19L12.5 13.5H17Z" fill="#fff"/></svg>
<div class="t" style="left:1240.5px;top:356.55px;font-size:11.7px;font-weight:bold;color:#222">Material</div>
<div class="a" style="left:1368px;top:350.3px;width:525px;height:23.899999999999977px;background:#e4e4e4"></div>
<div class="t" style="left:1374.4px;top:356.65px;font-size:12px;color:#3c3c3c">A36</div>
<svg class="a" style="left:1881px;top:359.25px" width="9" height="6"><path d="M0.5 0.5H8L4.25 5Z" fill="#111"/></svg>
<div class="a" style="left:1896.5px;top:350.3px;width:22px;height:23.899999999999977px;background:#9c9c9c"></div>
<svg class="a" style="left:1896.5px;top:350.3px" width="22" height="23.899999999999977"><path d="M11 4V19 M3.5 11.5H18.5" stroke="#fff" stroke-width="4"/></svg>
<div class="t" style="left:1240.5px;top:381.7px;font-size:11.7px;font-weight:bold;color:#222">Thickness [in]</div>
<div class="a" style="left:1368px;top:376px;width:500px;height:22.80000000000001px;background:#efefef"></div>
<div class="t" style="left:1371.5px;top:381.79999999999995px;font-size:11.5px;font-weight:bold;color:#111">1/2</div>
<div class="a" style="left:1872px;top:376px;width:21px;height:22.8px;background:#9c9c9c"></div>
<svg class="a" style="left:1872px;top:376px" width="21" height="23"><path d="M7 9.5L10.5 6L14 9.5Z M7 13.5L10.5 17L14 13.5Z" fill="#f0f0f0"/></svg>
<div class="a" style="left:1896.5px;top:376px;width:22px;height:22.80000000000001px;background:#9c9c9c"></div>
<svg class="a" style="left:1896.5px;top:376px" width="22" height="22.80000000000001"><circle cx="7.5" cy="15" r="0.8" fill="#eee"/><circle cx="11" cy="15" r="0.8" fill="#eee"/><circle cx="14.5" cy="15" r="0.8" fill="#eee"/></svg>
<div class="t" style="left:1240.5px;top:407.15000000000003px;font-size:11.7px;font-weight:bold;color:#222">Width [in]</div>
<div class="a" style="left:1368px;top:401.5px;width:550px;height:22.69999999999999px;background:#efefef"></div>
<div class="t" style="left:1371.5px;top:407.25px;font-size:11.5px;font-weight:bold;color:#111">1'-10"</div>
<div class="t" style="left:1240.5px;top:432.65000000000003px;font-size:11.7px;font-weight:bold;color:#222">Depth [in]</div>
<div class="a" style="left:1368px;top:427px;width:550px;height:22.69999999999999px;background:#efefef"></div>
<div class="t" style="left:1371.5px;top:432.75px;font-size:11.5px;font-weight:bold;color:#111">1'-10"</div>
<div class="t" style="left:1240.5px;top:457.65000000000003px;font-size:11.7px;font-weight:bold;color:#222">Shape</div>
<div class="a" style="left:1368px;top:452px;width:550px;height:22.69999999999999px;background:#e4e4e4"></div>
<div class="t" style="left:1374.4px;top:457.75px;font-size:12px;color:#3c3c3c">Rectangular</div>
<svg class="a" style="left:1905.8px;top:460.35px" width="9" height="6"><path d="M0.5 0.5H8L4.25 5Z" fill="#111"/></svg>
<svg class="a" style="left:1212px;top:487.7px" width="12" height="9"><path d="M0.5 0.5H11L5.75 7.5Z" fill="#e8792c"/></svg>
<div class="t" style="left:1240.5px;top:485.2px;font-size:14.2px;font-weight:bold;color:#e8792c">Connection</div>
<div class="t" style="left:1240.5px;top:514.0px;font-size:11.7px;font-weight:bold;color:#222">Gap [in]</div>
<div class="a" style="left:1368px;top:508.4px;width:550px;height:22.600000000000023px;background:#efefef"></div>
<div class="t" style="left:1371.5px;top:514.1px;font-size:11.5px;font-weight:bold;color:#111">7"</div>
<div class="t" style="left:1240.5px;top:538.6999999999999px;font-size:11.7px;font-weight:bold;color:#222">Alignment</div>
<div class="a" style="left:1368px;top:533px;width:550px;height:22.799999999999955px;background:#e4e4e4"></div>
<div class="t" style="left:1374.4px;top:538.8px;font-size:12px;color:#3c3c3c">Rear</div>
<svg class="a" style="left:1905.8px;top:541.4px" width="9" height="6"><path d="M0.5 0.5H8L4.25 5Z" fill="#111"/></svg>
<div class="t" style="left:1240.5px;top:564.0999999999999px;font-size:11.7px;font-weight:bold;color:#222">Connection type</div>
<div class="a" style="left:1368px;top:558.4px;width:550px;height:22.800000000000068px;background:#e4e4e4"></div>
<div class="t" style="left:1374.4px;top:564.1999999999999px;font-size:12px;color:#3c3c3c">Bolted</div>
<svg class="a" style="left:1905.8px;top:566.8px" width="9" height="6"><path d="M0.5 0.5H8L4.25 5Z" fill="#111"/></svg>
<svg class="a" style="left:1212px;top:594px" width="12" height="9"><path d="M0.5 0.5H11L5.75 7.5Z" fill="#e8792c"/></svg>
<div class="t" style="left:1240.5px;top:591.5px;font-size:14.2px;font-weight:bold;color:#e8792c">Welds</div>
<div class="t" style="left:1240.5px;top:619.7px;font-size:11.7px;font-weight:bold;color:#222">Plate [in]</div>
<div class="t" style="left:1368.7px;top:619.8000000000001px;font-size:12px;color:#555">2"</div>
<div class="a" style="left:1394.8px;top:614.6px;width:21px;height:21.6px;background:#9c9c9c"></div>
<svg class="a" style="left:1394.8px;top:614.6px" width="21" height="22"><path d="M7.5 9L10.5 6L13.5 9Z M7.5 13L10.5 16L13.5 13Z" fill="#d8d8d8"/></svg>
<div class="a" style="left:1415.7px;top:614.6px;width:355.7px;height:21.6px;background:#e4e4e4"></div>
<div class="t" style="left:1422.5px;top:619.8000000000001px;font-size:12px;color:#3c3c3c">E70xx</div>
<svg class="a" style="left:1760px;top:622.4000000000001px" width="9" height="6"><path d="M0.5 0.5H8L4.25 5Z" fill="#111"/></svg>
<div class="a" style="left:1773.3px;top:614.6px;width:21.7px;height:21.6px;background:#9c9c9c"></div>
<svg class="a" style="left:1773.3px;top:614.6px" width="22" height="22"><path d="M11 3.5V18 M4 10.8H18" stroke="#fff" stroke-width="4"/></svg>
<svg class="a" style="left:1801px;top:616.5px" width="16" height="17"><rect x="6.3" y="0.7" width="3.4" height="11.8" fill="#fff" stroke="#666" stroke-width="0.9"/><rect x="0.5" y="12.5" width="15" height="3.5" fill="#fff" stroke="#666" stroke-width="0.9"/><path d="M0.5 12.5L6.5 12.5L6.5 5Z" fill="#111"/></svg>
<svg class="a" style="left:1826px;top:616.5px" width="16" height="17"><rect x="6.3" y="0.7" width="3.4" height="11.8" fill="#fff" stroke="#666" stroke-width="0.9"/><rect x="0.5" y="12.5" width="15" height="3.5" fill="#fff" stroke="#666" stroke-width="0.9"/><path d="M15.5 12.5L9.5 12.5L9.5 5Z" fill="#111"/></svg>
<svg class="a" style="left:1850px;top:616.5px" width="16" height="17"><rect x="6.3" y="0.7" width="3.4" height="11.8" fill="#fff" stroke="#666" stroke-width="0.9"/><rect x="0.5" y="12.5" width="15" height="3.5" fill="#fff" stroke="#666" stroke-width="0.9"/><path d="M0.5 12.5L6.5 12.5L6.5 5Z" fill="#111"/><path d="M15.5 12.5L9.5 12.5L9.5 5Z" fill="#111"/></svg>
<svg class="a" style="left:1875.4px;top:616.5px" width="16" height="17"><rect x="6.3" y="0.7" width="3.4" height="11.8" fill="#fff" stroke="#666" stroke-width="0.9"/><rect x="0.5" y="12.5" width="15" height="3.5" fill="#fff" stroke="#666" stroke-width="0.9"/><path d="M4.5 12.5L6.5 12.5L6.5 9Z" fill="#111"/></svg>
<div class="a" style="left:1898px;top:615.3px;width:19px;height:19px;background:#ea7327"></div>
<svg class="a" style="left:1898px;top:615.3px" width="19" height="19"><path d="M9.5 3.5V13.5 M2.5 14.5H16.5" stroke="#fff" stroke-width="2" fill="none"/></svg>
<svg class="a" style="left:1212px;top:649px" width="12" height="9"><path d="M0.5 0.5H11L5.75 7.5Z" fill="#e8792c"/></svg>
<div class="t" style="left:1240.5px;top:646.5px;font-size:14.2px;font-weight:bold;color:#e8792c">Bolts</div>
<div class="t" style="left:1240.5px;top:674.8px;font-size:11.7px;font-weight:bold;color:#222">Type</div>
<div class="a" style="left:1368px;top:669px;width:525px;height:23px;background:#e4e4e4"></div>
<div class="t" style="left:1374.4px;top:674.9px;font-size:12px;color:#3c3c3c">3/4 A325</div>
<svg class="a" style="left:1881px;top:677.5px" width="9" height="6"><path d="M0.5 0.5H8L4.25 5Z" fill="#111"/></svg>
<div class="a" style="left:1896.5px;top:669px;width:22px;height:23px;background:#9c9c9c"></div>
<svg class="a" style="left:1896.5px;top:669px" width="22" height="23"><path d="M11 4V19 M3.5 11.5H18.5" stroke="#fff" stroke-width="4"/></svg>
<div class="t" style="left:1240.5px;top:699.9px;font-size:11.7px;font-weight:bold;color:#222">Reference line</div>
<div class="a" style="left:1368px;top:694.2px;width:550px;height:22.799999999999955px;background:#e4e4e4"></div>
<div class="t" style="left:1374.4px;top:700.0px;font-size:12px;color:#3c3c3c">Member x-axis</div>
<svg class="a" style="left:1905.8px;top:702.6px" width="9" height="6"><path d="M0.5 0.5H8L4.25 5Z" fill="#111"/></svg>
<div class="t" style="left:1240.5px;top:725.3px;font-size:11.7px;font-weight:bold;color:#222">Rows [in]</div>
<div class="a" style="left:1368px;top:719.6px;width:550px;height:22.799999999999955px;background:#efefef"></div>
<div class="t" style="left:1371.5px;top:725.4px;font-size:11.5px;font-weight:bold;color:#111">2"; -2"</div>
<div class="t" style="left:1240.5px;top:750.6999999999999px;font-size:11.7px;font-weight:bold;color:#222">Positions [in]</div>
<div class="a" style="left:1368px;top:745px;width:550px;height:22.799999999999955px;background:#efefef"></div>
<div class="t" style="left:1371.5px;top:750.8px;font-size:11.5px;font-weight:bold;color:#111">2" 3"*2</div>
<div class="t" style="left:1240.5px;top:775.6999999999999px;font-size:11.7px;font-weight:bold;color:#222">Grid</div>
<div class="a" style="left:1368px;top:770px;width:550px;height:22.799999999999955px;background:#e4e4e4"></div>
<div class="t" style="left:1374.4px;top:775.8px;font-size:12px;color:#3c3c3c">Regular</div>
<svg class="a" style="left:1905.8px;top:778.4px" width="9" height="6"><path d="M0.5 0.5H8L4.25 5Z" fill="#111"/></svg>
<div class="t" style="left:1240.5px;top:801.8px;font-size:11.7px;font-weight:bold;color:#222">Shear plane in thread</div>
<div class="a" style="left:1375px;top:799px;width:13px;height:12px;background:#ececec"></div>
<svg class="a" style="left:1374px;top:796px" width="18" height="17"><path d="M3.5 9.5L6.5 12.5L13 4" stroke="#f0a030" stroke-width="2" fill="none"/></svg>
<div class="t" style="left:1240.5px;top:826.5px;font-size:11.7px;font-weight:bold;color:#222">Shear force transfer</div>
<div class="a" style="left:1368px;top:820.8px;width:550px;height:22.800000000000068px;background:#e4e4e4"></div>
<div class="t" style="left:1374.4px;top:826.6px;font-size:12px;color:#3c3c3c">Bearing - tension/shear interaction</div>
<svg class="a" style="left:1905.8px;top:829.2px" width="9" height="6"><path d="M0.5 0.5H8L4.25 5Z" fill="#111"/></svg>
<div class="a" style="left:1218.3999999999999px;top:209.3px;width:245.9000000000001px;height:62.39999999999998px;border:4px solid #e34848;border-radius:13px"></div>
<div class="a" style="left:1220.3px;top:292.2px;width:244.0px;height:188.0px;border:4px solid #e34848;border-radius:13px"></div>
<div class="a" style="left:1222.2px;top:504.1px;width:239.0999999999999px;height:81.89999999999998px;border:4px solid #e34848;border-radius:13px"></div>
<div class="a" style="left:1224.1px;top:603.8px;width:699.7px;height:40.90000000000009px;border:4px solid #e34848;border-radius:13px"></div>
<div class="a" style="left:1223.3999999999999px;top:661.5px;width:373.60000000000014px;height:188.0px;border:4px solid #e34848;border-radius:13px"></div>
<div class="t" style="left:24px;top:1012px;font-size:11.6px;font-weight:bold;color:#858585">Design code:</div>
<div class="t" style="left:102px;top:1012px;font-size:11.6px;font-weight:bold;color:#fff">AISC - LRFD (2022)</div>
<div class="t" style="left:228.4px;top:1012px;font-size:11.6px;font-weight:bold;color:#858585">Analysis:</div>
<div class="t" style="left:282.8px;top:1012px;font-size:11.6px;font-weight:bold;color:#fff">Stress, strain</div>
<div class="t" style="left:375.6px;top:1012px;font-size:11.6px;font-weight:bold;color:#858585">Load effects:</div>
<div class="t" style="left:452.9px;top:1012px;font-size:11.6px;font-weight:bold;color:#fff">Equilibrium not required</div>
<div class="t" style="left:612.5px;top:1012px;font-size:11.6px;font-weight:bold;color:#858585">Units:</div>
<div class="t" style="left:653.4px;top:1012px;font-size:11.6px;font-weight:bold;color:#fff">in</div>
<div class="t" style="left:1799px;top:1013px;font-size:11.8px;color:#fff"><span style="color:#e8792c">www.</span>ideastatica<span style="color:#e8792c">.com</span></div>
</body></html>
